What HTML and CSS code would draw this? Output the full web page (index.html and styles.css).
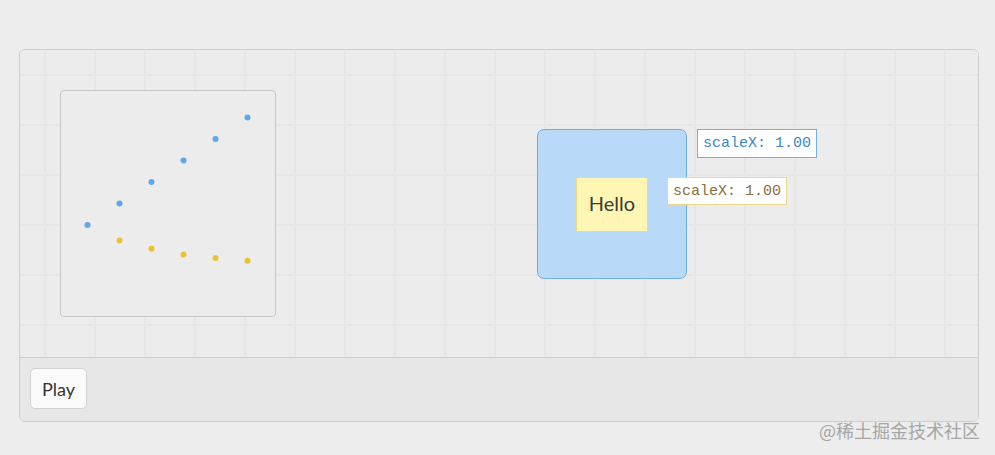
FILE: index.html
```html
<!DOCTYPE html>
<html lang="en">
<head>
    <meta charset="UTF-8">
    <title>Scale Demo</title>
    <link rel="stylesheet" href="styles.css">
</head>
<body>
    <main class="page">
        <div class="demo">
            <div class="stage">
                <div class="chart">
                    <svg width="214" height="225" viewBox="0 0 214 225">
                        <g fill="#5ea7e8">
                            <circle cx="26.5" cy="134" r="3"/>
                            <circle cx="58.5" cy="112.5" r="3"/>
                            <circle cx="90.5" cy="91" r="3"/>
                            <circle cx="122.5" cy="69.5" r="3"/>
                            <circle cx="154.5" cy="48" r="3"/>
                            <circle cx="186.5" cy="26.5" r="3"/>
                        </g>
                        <g fill="#ebc22d">
                            <circle cx="58.5" cy="149.5" r="3"/>
                            <circle cx="90.5" cy="157.8" r="3"/>
                            <circle cx="122.5" cy="163.5" r="3"/>
                            <circle cx="154.5" cy="167" r="3"/>
                            <circle cx="186.5" cy="169.8" r="3"/>
                        </g>
                    </svg>
                </div>
                <div class="outer-box">
                    <div class="inner-box">Hello</div>
                </div>
                <div class="label label-outer">scaleX: 1.00</div>
                <div class="label label-inner">scaleX: 1.00</div>
            </div>
            <div class="controls">
                <button class="play-btn">Play</button>
            </div>
        </div>
    </main>
    <div class="watermark">@稀土掘金技术社区</div>
</body>
</html>
```

FILE: styles.css
```css
body {
    margin: 0;
    background-color: #ededed;
    font-family: Lato, "Open Sans", sans-serif;
    color: #333333;
}
.page {
    padding: 49px 16px 0 19px;
}
.demo {
    border: 1px solid #cdcdcd;
    border-radius: 6px;
    overflow: hidden;
}
.stage {
    position: relative;
    height: 307px;
    background-color: #ececec;
    background-image:
        linear-gradient(to right, #e6e6e6 2px, transparent 2px),
        linear-gradient(to bottom, #e6e6e6 2px, transparent 2px);
    background-size: 50px 50px;
    background-position: 24px 24px;
    border-bottom: 1px solid #cdcdcd;
}
.chart {
    position: absolute;
    left: 40px;
    top: 40px;
    width: 214px;
    height: 225px;
    border: 1px solid #c6c6c6;
    border-radius: 4px;
    background-color: #ececec;
}
.chart svg {
    display: block;
}
.outer-box {
    position: absolute;
    left: 517px;
    top: 79px;
    width: 148px;
    height: 148px;
    background-color: #b8d9f8;
    border: 1px solid #73aee0;
    border-radius: 7px;
}
.inner-box {
    position: absolute;
    left: 38px;
    top: 47px;
    width: 72px;
    height: 55px;
    display: flex;
    align-items: center;
    justify-content: center;
    padding-bottom: 3px;
    box-sizing: border-box;
    background-color: #fff6b4;
    border: 1px solid #f0da7e;
    font-size: 20px;
    color: #3a3a3a;
}
.label {
    position: absolute;
    box-sizing: border-box;
    width: 120px;
    display: flex;
    align-items: center;
    justify-content: center;
    background-color: #ffffff;
    font-family: "Liberation Mono", monospace;
    font-size: 15px;
}
.label-outer {
    left: 677px;
    top: 79px;
    height: 29px;
    border: 1px solid #71b1e4;
    color: #3b86c6;
}
.label-inner {
    left: 647px;
    top: 127px;
    height: 28px;
    border: 1px solid #efd78c;
    color: #8c6d3c;
}
.controls {
    background-color: #e7e7e7;
    padding: 10px 10px 12px;
}
.play-btn {
    display: block;
    height: 41px;
    padding: 0 11px;
    font-family: Lato, "Open Sans", sans-serif;
    font-size: 18px;
    color: #333333;
    background-color: #fafafa;
    border: 1px solid #d2d2d2;
    border-radius: 5px;
}
.watermark {
    position: absolute;
    left: 819px;
    top: 417px;
    font-family: "Noto Sans CJK SC", sans-serif;
    font-size: 18px;
    color: #a6a6a6;
}
```
